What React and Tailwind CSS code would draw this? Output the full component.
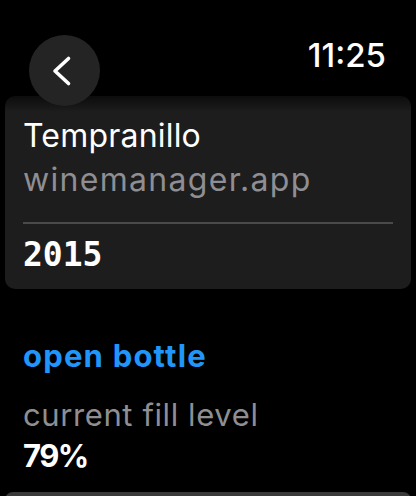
const sans = { fontFamily: 'Inter, "Noto Sans", sans-serif' };
const mono = { fontFamily: '"DejaVu Sans Mono", "Liberation Mono", monospace' };

export default function App() {
  return (
    <div className="relative w-[416px] h-[496px] overflow-hidden bg-black text-white" style={sans}>
      {/* nav bar overlays the scrolled content */}
      <div className="absolute inset-x-0 top-0 z-10 h-[112px] bg-linear-to-b from-black from-[76%] to-transparent">
        <div className="flex items-start justify-between pl-[29px] pr-[30px] pt-[35px]">
          <button className="flex h-[71px] w-[71px] items-center justify-center rounded-full bg-[#242424]">
            <svg width="28" height="32" viewBox="0 0 28 32">
              <path d="M17.5 3.5 L4 16 L17.5 28.5" fill="none" stroke="white" strokeWidth="3.6" strokeLinecap="round" strokeLinejoin="round" />
            </svg>
          </button>
          <span className="text-[33px] font-medium leading-[40px]">11:25</span>
        </div>
      </div>

      <div className="flex flex-col px-[5px] pt-[96px]">
        <div className="rounded-[10px] bg-[#1d1d1d] px-[18px] pt-[18px] pb-[16px]">
          <div className="text-[32px] leading-[44px] tracking-[0.2px]">Tempranillo</div>
          <div className="text-[32px] leading-[44px] tracking-[1.3px] text-[#8e8e93]">winemanager.app</div>
          <div className="mt-[20px] h-[2px] bg-[#4a4a4a]" />
          <div className="mt-[13px] text-[33px] font-bold leading-[36px]" style={mono}>2015</div>
        </div>

        <div className="px-[18px] pt-[47px]">
          <div className="text-[31px] font-bold leading-[40px] tracking-[1.2px] text-[#2096fb]">open bottle</div>
          <div className="mt-[18px] text-[31px] leading-[42px] tracking-[0.6px] text-[#8e8e93]">current fill level</div>
          <div className="text-[31px] font-bold leading-[40px] tracking-[-1.5px]">79%</div>
        </div>

        <div className="mt-[16px] h-[10px] rounded-t-[8px] bg-[#3a3a3a]" />
      </div>
    </div>
  );
}
